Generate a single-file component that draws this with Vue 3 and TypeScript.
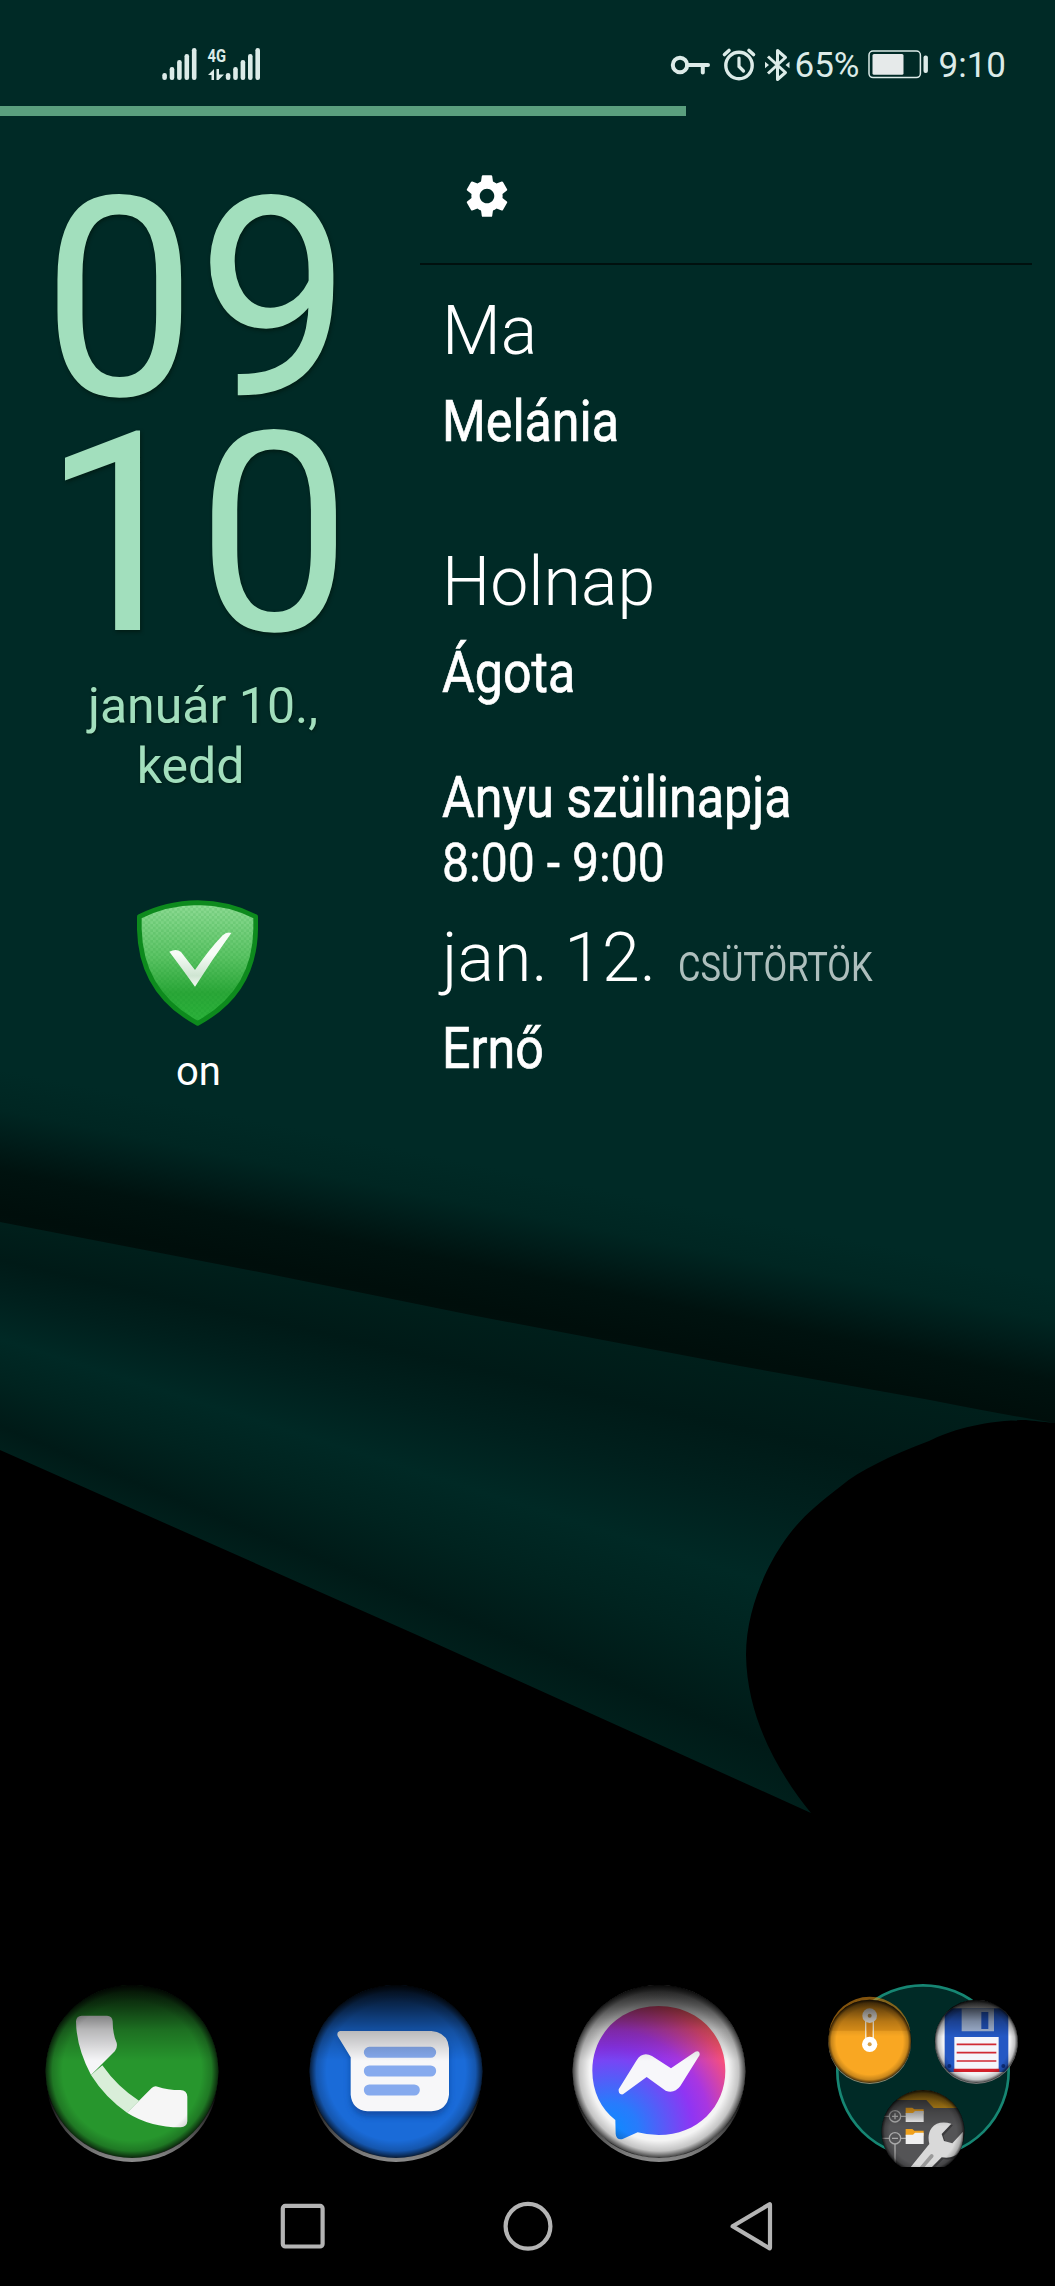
<template>
  <div class="screen">
    <!-- wallpaper -->
    <div class="wallpaper">
      <div class="paper"></div>
      <div class="roll"></div>
    </div>

    <!-- status bar -->
    <header class="status-bar">
      <svg class="signal" width="130" height="40" viewBox="0 0 130 40" fill="#dcebe8">
        <rect v-for="(h, i) in barHeights" :key="'a' + i" :x="2.3 + i * 7.4" :y="35 - h" width="4.6" :height="h" rx="2.2" />
        <rect v-for="(h, i) in barHeights" :key="'b' + i" :x="65.8 + i * 7.4" :y="35 - h" width="4.6" :height="h" rx="2.2" />
        <text x="47.5" y="17" textLength="18.5" lengthAdjust="spacingAndGlyphs" class="net">4G</text>
        <path d="M48 30 54 24V35H51.5V30ZM56.5 24H59V29.5H64L58.5 35H56.5Z" />
      </svg>
      <div class="status-right">
        <svg class="key" width="42" height="34" viewBox="0 0 42 34" fill="none" stroke="#dcebe8">
          <circle cx="11" cy="17" r="7.2" stroke-width="4" />
          <path d="M18 17H39M33.8 17V24.5" stroke-width="4" stroke-linecap="round" />
        </svg>
        <svg class="alarm" width="36" height="36" viewBox="0 0 36 36" fill="none" stroke="#dcebe8" stroke-linecap="round">
          <circle cx="18" cy="19.5" r="13.2" stroke-width="3.4" />
          <path d="M18 12V20.5L22.5 25" stroke-width="3.2" />
          <path d="M3.5 8.5 8 4.5M32.5 8.5 28 4.5" stroke-width="3.6" />
        </svg>
        <svg class="bluetooth" width="28" height="36" viewBox="0 0 28 36" fill="none" stroke="#dcebe8" stroke-width="3">
          <path d="M5 9.5 22.5 25.5 14.5 32.5V3.5L22.5 10.5 5 26.5" stroke-linejoin="round" />
          <path d="M2 14.8 6 18 2 21.2ZM26.5 14.8 22.5 18 26.5 21.2Z" fill="#dcebe8" stroke="none" />
        </svg>
        <span class="percent">{{ battery }}%</span>
        <svg class="battery" width="62" height="30" viewBox="0 0 62 30">
          <rect x="1" y="2" width="51.4" height="26.6" rx="4" fill="none" stroke="#dcebe8" stroke-width="1.5" />
          <rect x="4.5" y="5" width="31" height="20.8" rx="1.5" fill="#e6eaea" />
          <rect x="55.5" y="6.5" width="4.4" height="17.6" rx="2" fill="#dcebe8" />
        </svg>
        <span class="time">9:10</span>
      </div>
    </header>
    <div class="progress"><div class="progress-value" :style="{ width: battery + '%' }"></div></div>

    <main class="home">
      <!-- clock and protection state -->
      <section class="left">
        <div class="clock">
          <div>09</div>
          <div>10</div>
        </div>
        <div class="date">január 10.,<br />kedd&nbsp;&nbsp;</div>
        <svg class="shield" width="121" height="126" viewBox="0 0 363 378">
          <defs>
            <linearGradient id="shieldFill" x1="0" y1="0" x2="0" y2="1">
              <stop offset="0" stop-color="#90dc96" />
              <stop offset=".45" stop-color="#5cc465" />
              <stop offset=".75" stop-color="#2ba738" />
              <stop offset="1" stop-color="#2cb33b" />
            </linearGradient>
            <linearGradient id="checkFill" x1="0" y1="0" x2="0" y2="1">
              <stop offset=".4" stop-color="#f7fcf7" />
              <stop offset=".8" stop-color="#cfe5d2" />
              <stop offset="1" stop-color="#f4faf4" />
            </linearGradient>
            <pattern id="dots" width="16" height="16" patternUnits="userSpaceOnUse">
              <path d="M0 0H8V8H0ZM8 8H16V16H8Z" fill="#0b8a22" opacity=".13" />
            </pattern>
          </defs>
          <path :d="shieldPath" fill="url(#shieldFill)" />
          <path :d="shieldPath" fill="url(#dots)" stroke="#0d8a1d" stroke-width="14" stroke-linejoin="round" />
          <path d="M97 155Q118 144 132 156L174 210Q216 149 257 106Q270 94 283 99Q226 178 174 260Q134 204 97 155Z" fill="url(#checkFill)" />
        </svg>
        <div class="shield-label">on</div>
      </section>

      <!-- calendar widget -->
      <section class="calendar">
        <div class="calendar-head">
          <svg width="50" height="50" viewBox="0 0 24 24" fill="#fff">
            <path d="M19.43 12.98c.04-.32.07-.64.07-.98s-.03-.66-.07-.98l2.11-1.65c.19-.15.24-.42.12-.64l-2-3.46c-.12-.22-.39-.3-.61-.22l-2.49 1c-.52-.4-1.08-.73-1.69-.98l-.38-2.65C14.46 2.18 14.25 2 14 2h-4c-.25 0-.46.18-.49.42l-.38 2.65c-.61.25-1.17.59-1.69.98l-2.49-1c-.23-.09-.49 0-.61.22l-2 3.46c-.13.22-.07.49.12.64l2.11 1.65c-.04.32-.07.65-.07.98s.03.66.07.98l-2.11 1.65c-.19.15-.24.42-.12.64l2 3.46c.12.22.39.3.61.22l2.49-1c.52.4 1.08.73 1.69.98l.38 2.65c.03.24.24.42.49.42h4c.25 0 .46-.18.49-.42l.38-2.65c.61-.25 1.17-.59 1.69-.98l2.49 1c.23.09.49 0 .61-.22l2-3.46c.12-.22.07-.49-.12-.64l-2.11-1.65zM12 15.5c-1.93 0-3.5-1.57-3.5-3.5s1.57-3.5 3.5-3.5 3.5 1.57 3.5 3.5-1.57 3.5-3.5 3.5z" />
          </svg>
        </div>
        <div v-for="day in days" :key="day.title" class="day" :class="day.spacing">
          <div class="day-title">
            {{ day.title }}<span v-if="day.weekday" class="weekday">{{ day.weekday }}</span>
          </div>
          <div class="entry">{{ day.name }}</div>
          <template v-if="day.event">
            <div class="entry event">{{ day.event }}</div>
            <div class="event-time">{{ day.eventTime }}</div>
          </template>
        </div>
      </section>
    </main>

    <!-- dock -->
    <footer class="dock">
      <svg viewBox="-23 0 660 660" class="app">
        <defs>
          <linearGradient id="topShade" x1="0" y1="0" x2="0" y2="1">
            <stop offset="0" stop-color="#000" stop-opacity=".88" />
            <stop offset=".12" stop-color="#000" stop-opacity=".62" />
            <stop offset=".26" stop-color="#000" stop-opacity=".26" />
            <stop offset=".44" stop-color="#000" stop-opacity="0" />
          </linearGradient>
          <radialGradient id="edgeShade">
            <stop offset=".8" stop-color="#000" stop-opacity="0" />
            <stop offset=".92" stop-color="#000" stop-opacity=".2" />
            <stop offset="1" stop-color="#000" stop-opacity=".75" />
          </radialGradient>
          <linearGradient id="rim" x1="0" y1="0" x2="0" y2="1">
            <stop offset=".6" stop-color="#000" />
            <stop offset=".85" stop-color="#555" />
            <stop offset="1" stop-color="#8c8c8c" />
          </linearGradient>
        </defs>
        <circle cx="307" cy="347" r="259" fill="url(#rim)" />
        <circle cx="307" cy="334" r="259" fill="#27962d" />
        <path d="M184 345 218 316Q265 383 328 422L292 458Q226 412 184 345Z" fill="#d9eed9" />
        <path d="M156 167H232Q248 168 249 184Q249 222 261 248Q264 262 256 273L184 345Q140 262 139 184Q140 168 156 167Z" fill="#f6f6f8" />
        <path d="M292 458 366 384Q374 377 384 380Q414 390 452 390Q472 391 473 410V484Q472 501 453 502Q362 502 292 458Z" fill="#f6f6f6" />
        <circle cx="307" cy="334" r="260" fill="url(#topShade)" />
        <circle cx="307" cy="334" r="260" fill="url(#edgeShade)" />
      </svg>

      <svg viewBox="-12 0 660 660" class="app">
        <defs>
          <filter id="soft" x="-20%" y="-20%" width="140%" height="150%"><feGaussianBlur stdDeviation="9" /></filter>
        </defs>
        <circle cx="318" cy="347" r="259" fill="url(#rim)" />
        <circle cx="318" cy="334" r="259" fill="#1a6bd8" />
        <path d="M150 228H420Q476 232 476 280V412Q472 466 424 468H232Q186 464 182 412V292Z" fill="#0a3c8c" opacity=".65" filter="url(#soft)" />
        <path d="M152 213H424Q474 218 477 264V404Q472 450 424 454H232Q186 449 182 404V292L143 228Q139 215 152 213Z" fill="#f7f7f9" />
        <path d="M238 277H422M238 333H422M238 390H373" stroke="#86aaee" stroke-width="33" stroke-linecap="round" />
        <circle cx="318" cy="334" r="260" fill="url(#topShade)" />
        <circle cx="318" cy="334" r="260" fill="url(#edgeShade)" />
      </svg>

      <svg viewBox="-16 0 660 660" class="app">
        <defs>
          <radialGradient id="messenger" gradientUnits="userSpaceOnUse" cx="165" cy="515" r="435">
            <stop offset="0" stop-color="#0a8cff" />
            <stop offset=".2" stop-color="#287bfc" />
            <stop offset=".58" stop-color="#8f35f3" />
            <stop offset=".7" stop-color="#a936e0" />
            <stop offset=".93" stop-color="#f8507a" />
            <stop offset="1" stop-color="#ff5c66" />
          </radialGradient>
        </defs>
        <circle cx="314" cy="347" r="259" fill="url(#rim)" />
        <circle cx="314" cy="334" r="259" fill="#f4f4f4" />
        <path d="M313 138C430 138 513 224 513 332S430 525 313 525Q280 525 250 517L205 537Q186 541 184 522L183 480C140 446 114 394 114 332C114 224 196 138 313 138Z" fill="url(#messenger)" />
        <path d="M193 388 246 302Q264 273 293 288L350 325 423 275Q437 271 436 285L378 378Q360 402 334 392L277 351 206 403Q191 405 193 388Z" fill="#f7f7fa" />
        <circle cx="314" cy="334" r="260" fill="url(#topShade)" />
        <circle cx="314" cy="334" r="260" fill="url(#edgeShade)" />
      </svg>

      <svg viewBox="10 0 660 660" class="app">
        <defs>
          <clipPath id="folderClip"><rect x="0" y="0" width="700" height="621" /></clipPath>
          <clipPath id="floppyClip"><circle cx="500" cy="245" r="124" /></clipPath>
          <clipPath id="filesClip"><circle cx="340" cy="515" r="124" /></clipPath>
          <linearGradient id="paperFolder" x1="0" y1="0" x2="0" y2="1">
            <stop offset="0" stop-color="#bbb" />
            <stop offset="1" stop-color="#eee" />
          </linearGradient>
        </defs>
        <g clip-path="url(#folderClip)">
          <circle cx="340" cy="333" r="257" fill="#002a26" stroke="#168673" stroke-width="8" />

          <circle cx="180" cy="248" r="124" fill="#8a8a70" />
          <circle cx="180" cy="244" r="124" fill="#f9a722" />
          <path d="M58 212A124 124 0 0 1 302 212Z" fill="#d98a16" opacity=".6" />
          <path d="M168 170V250M191 170V250" stroke="#f5e6cc" stroke-width="4" />
          <path d="M172 190H187V232H172Z" fill="#e08b1c" />
          <circle cx="180" cy="167" r="22" fill="#e6e1da" />
          <circle cx="180" cy="167" r="6" fill="#b58a44" />
          <circle cx="180" cy="253" r="23" fill="#fff" />
          <circle cx="180" cy="253" r="6" fill="#d5a04a" />
          <circle cx="180" cy="244" r="125" fill="url(#topShade)" opacity=".8" />
          <circle cx="180" cy="244" r="125" fill="url(#edgeShade)" />

          <circle cx="500" cy="248" r="124" fill="#777" />
          <circle cx="500" cy="244" r="124" fill="#f3f3f5" />
          <g clip-path="url(#floppyClip)">
            <path d="M405 145H596V336H418L405 322Z" fill="#2458c4" />
            <path d="M456 145H553V214H456Z" fill="#a5b8d8" />
            <path d="M515 156H536V207H515Z" fill="#2052bb" />
            <path d="M434 231H567V327H434Z" fill="#f5f5fa" />
            <path d="M441 253H560M441 278H560M441 303H560" stroke="#d02a34" stroke-width="5" />
            <path d="M432 326H569V336H432Z" fill="#d21f2a" />
            <circle cx="419" cy="318" r="6" fill="#0e2f7e" />
            <circle cx="581" cy="318" r="6" fill="#0e2f7e" />
          </g>
          <circle cx="500" cy="244" r="125" fill="url(#topShade)" />
          <circle cx="500" cy="244" r="125" fill="url(#edgeShade)" />

          <circle cx="340" cy="515" r="124" fill="#545456" />
          <g clip-path="url(#filesClip)">
            <path d="M255 380H450V444H372L350 420H262Z" fill="#d59a1c" />
            <g fill="none" stroke="#a9a9a9" stroke-width="4">
              <path d="M210 469H238M272 469H290M210 535H238M272 535H290M256 552V640M247 469H265M256 460V478M247 535H265" />
              <circle cx="256" cy="469" r="17" />
              <circle cx="256" cy="535" r="17" />
            </g>
            <path d="M288 443H308L314 448H342V463H288Z" fill="#e29a1d" />
            <path d="M288 459H310L316 453H342V486H288Z" fill="url(#paperFolder)" />
            <path d="M288 507H308L314 512H342V527H288Z" fill="#f0a11c" />
            <path d="M288 524H310L316 518H342V552H288Z" fill="#f0f0f0" />
            <path d="M425 491Q385 480 366 504Q352 522 359 552L296 630H358L396 592Q430 598 448 577Q462 560 460 515L428 550 403 543 396 522Z" fill="#2b2b2d" transform="translate(5 5)" opacity=".6" />
            <path d="M425 491Q385 480 366 504Q352 522 359 552L296 630H358L396 592Q430 598 448 577Q462 560 460 515L428 550 403 543 396 522Z" fill="#d9d9d9" />
            <path d="M366 588 330 630" stroke="#999" stroke-width="11" stroke-linecap="round" />
          </g>
          <circle cx="340" cy="515" r="125" fill="url(#topShade)" opacity=".75" />
          <circle cx="340" cy="515" r="125" fill="url(#edgeShade)" />
        </g>
      </svg>
    </footer>

    <!-- navigation buttons -->
    <nav class="nav">
      <svg width="60" height="60" viewBox="0 0 60 60"><rect x="9.8" y="9.9" width="39.8" height="40.6" rx="2.5" /></svg>
      <svg width="60" height="60" viewBox="0 0 60 60"><circle cx="30" cy="30.3" r="22.4" /></svg>
      <svg width="60" height="60" viewBox="0 0 60 60"><path d="M9.6 30.3 46.5 8.3Q47 8 47 9V51.5Q47 52.8 46 52Z" /></svg>
    </nav>
  </div>
</template>

<script setup lang="ts">
import { ref } from 'vue';

interface Day {
  title: string;
  weekday?: string;
  name: string;
  event?: string;
  eventTime?: string;
  spacing?: string;
}

const battery = ref(65);

// signal strength bars, from short to tall
const barHeights = [7, 13, 20, 26, 32];

const shieldPath =
  'M182 8Q276 9 356 50V88C354 218 290 312 182 370C74 312 10 218 7 88V50Q88 9 182 8Z';

const days: Day[] = [
  { title: 'Ma', name: 'Melánia' },
  { title: 'Holnap', name: 'Ágota', event: 'Anyu szülinapja', eventTime: '8:00 - 9:00', spacing: 'far' },
  { title: 'jan. 12.', weekday: 'CSÜTÖRTÖK', name: 'Ernő', spacing: 'near' },
];
</script>

<style>
body {
  margin: 0;
  background: #000;
}
</style>

<style scoped>
.screen {
  position: relative;
  display: flex;
  flex-direction: column;
  width: 1055px;
  height: 2286px;
  overflow: hidden;
  background: #000;
  color: #fff;
  font-family: Roboto, "Noto Sans", sans-serif;
}

/* wallpaper lies under everything else */
.wallpaper {
  position: absolute;
  inset: 0;
}

.paper,
.roll {
  position: absolute;
  inset: 0;
}

.paper {
  background: linear-gradient(191.3deg, #002a26 0, #002a26 1255px, #002622 1295px, #001d1a 1322px, #00120f 1355px, #000e0b 1395px, #00120f 1450px);
  clip-path: path("M0 0H1055V1423L1026 1420L740 1372L0 1228Z");
}

.roll {
  background: conic-gradient(from 90deg at -880px 1060px, #001f1b 0deg, #001f1b 10.6deg, #001a17 12.8deg, #00201d 15deg, #002925 17.6deg, #00231f 20deg, #001a17 22.6deg, #00201c 24.2deg, #000 26deg);
  clip-path: path("M0 1222L269 1274L471 1315L740 1366L930 1400Q1000 1414 1055 1423L1026 1420C985 1420 950 1430 929 1441C890 1456 860 1470 841 1486C812 1508 795 1524 781 1546C765 1570 746 1612 746 1655C747 1720 780 1775 811 1813L417 1635L0 1450Z");
}

.status-bar,
.progress,
.home,
.dock,
.nav {
  position: relative;
}

.status-bar {
  display: flex;
  justify-content: space-between;
  box-sizing: border-box;
  height: 105px;
  padding: 45px 50px 0 160px;
}

.net {
  font-size: 19px;
  font-weight: 700;
}

.status-right {
  display: flex;
  align-items: flex-start;
  height: 40px;
  color: #dcebe8;
  font-size: 35px;
  line-height: 42px;
}

.key {
  margin: 3px 10px 0 0;
}

.alarm {
  margin: 1px 6px 0 0;
}

.bluetooth {
  margin: 2px 4px 0 0;
}

.battery {
  margin: 4px 9px 0 8px;
}

.time {
  margin-right: -1px;
}

.progress {
  height: 11px;
}

.progress-value {
  height: 10px;
  margin-top: 0.5px;
  background: #5a9f7e;
}

.home {
  display: grid;
  grid-template-columns: 420px 612px;
  height: 1844px;
}

.left {
  display: flex;
  flex-direction: column;
  align-items: flex-start;
  padding-top: 66px;
}

.clock {
  margin-left: 42px;
  color: #a2dfbd;
  font-size: 279px;
  line-height: 235px;
  text-shadow: 1px 2px 4px rgba(0, 20, 10, 0.6);
  transform: scaleX(0.987);
  transform-origin: left center;
}

.date {
  width: 406px;
  margin-top: 24px;
  color: #a2dfbd;
  font-size: 50px;
  line-height: 60px;
  text-align: center;
  text-shadow: 1px 1px 3px rgba(0, 20, 10, 0.6);
}

.shield {
  margin: 104px 0 0 137px;
}

.shield-label {
  width: 397px;
  margin-top: 22px;
  font-size: 40px;
  line-height: 48px;
  text-align: center;
}

.calendar-head {
  box-sizing: border-box;
  height: 149px;
  padding: 55px 0 0 42px;
  border-bottom: 2px solid #00100e;
}

.day {
  padding: 26px 0 0 22px;
}

.day.far {
  padding-top: 87px;
}

.day.near {
  padding-top: 25px;
}

.day-title {
  height: 80px;
  font-size: 68px;
  font-weight: 300;
  line-height: 80px;
  white-space: nowrap;
}

.weekday,
.entry,
.event-time {
  transform: scaleX(0.88);
  transform-origin: left center;
}

.weekday {
  display: inline-block;
  margin-left: 22px;
  color: #aebfbd;
  font-size: 41px;
  font-weight: 400;
  line-height: 48px;
  transform: scaleX(0.842);
}

.entry {
  margin-top: 18px;
  font-size: 57px;
  line-height: 66px;
  -webkit-text-stroke: 0.7px #fff;
}

.entry.event {
  margin-top: 59px;
}

.event-time {
  margin-top: 2px;
  font-size: 53px;
  line-height: 60px;
  -webkit-text-stroke: 0.5px #fff;
  transform: scaleX(0.908);
}

.dock {
  display: grid;
  grid-template-columns: repeat(4, 1fr);
  justify-items: center;
}

.app {
  width: 220px;
  height: 220px;
}

.nav {
  display: flex;
  justify-content: center;
  gap: 165px;
  padding-top: 16px;
}

.nav svg {
  fill: none;
  stroke: #b4b4b4;
  stroke-width: 4.2;
  stroke-linejoin: round;
}
</style>
